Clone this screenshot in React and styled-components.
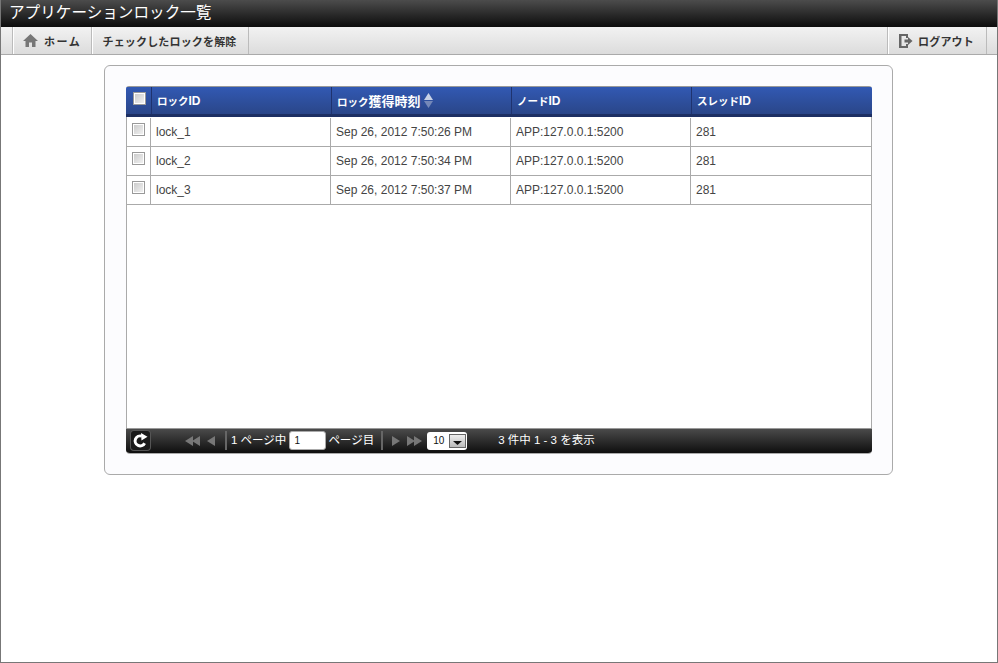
import React from "react";
import styled, { createGlobalStyle } from "styled-components";

const FONT = `"Liberation Sans", "Noto Sans CJK JP", sans-serif`;

const Global = createGlobalStyle`
  html, body { margin: 0; padding: 0; background: #fff; }
  body { font-family: ${FONT}; }
  * { box-sizing: border-box; }
`;

const Page = styled.div`
  width: 998px;
  height: 663px;
  border: 1px solid #777;
  border-top: 0;
  display: flex;
  flex-direction: column;
  background: #fff;
  overflow: hidden;
`;
const TitleBar = styled.div`
  height: 27px;
  padding: 2px 0 0 8px;
  background: linear-gradient(#4c4c4c, #0c0c0c);
  color: #fff;
  font-size: 15.6px;
  line-height: 22px;
  white-space: nowrap;
`;
const Toolbar = styled.div`
  height: 28px;
  display: flex;
  padding: 0 10px 0 11px;
  background: linear-gradient(#f2f2f2, #dcdcdc);
  border-bottom: 1px solid #aaa;
`;
const ToolButton = styled.div`
  display: flex;
  align-items: center;
  gap: ${p => p.$gap || 6}px;
  height: 27px;
  padding: 0 ${p => p.$pad || 11}px 0 ${p => p.$padLeft || 10}px;
  border-left: 1px solid #bbb;
  border-right: ${p => p.$closed ? "1px solid #bbb" : "0"};
  box-shadow: inset 1px 0 #fff;
  font-size: 11px;
  font-weight: bold;
  letter-spacing: ${p => p.$spread || 0}px;
  color: #333;
  white-space: nowrap;
`;
const Spacer = styled.div`flex: 1;`;
const Main = styled.div`
  padding: 10px 104px 0 103px;
`;
const Panel = styled.div`
  height: 410px;
  padding: 20px 20px 20px 21px;
  background: #fcfcfe;
  border: 1px solid #aaa;
  border-radius: 6px;
`;
const Grid = styled.div`
  height: 368px;
  display: flex;
  flex-direction: column;
  background: #fff;
  border-radius: 3px 3px 4px 4px;
  border-bottom: 1px solid #aaa;
  overflow: hidden;
`;
const HeadRow = styled.div`
  height: 31px;
  display: grid;
  grid-template-columns: 25px 180px 180px 180px 1fr;
  background: linear-gradient(#3259b3, #2a4689);
  border-top: 1px solid #999;
  border-bottom: 3px solid #1d2f63;
`;
const HeadCell = styled.div`
  display: flex;
  align-items: center;
  gap: 3px;
  padding: 0 0 0 5px;
  border-left: 1px solid #1f336f;
  color: #fff;
  font-size: 12px;
  font-weight: bold;
  white-space: nowrap;
`;
const HeadCheck = styled.div`
  display: flex;
  align-items: center;
  padding: 0 0 4px 7px;
`;
const Kana = styled.span`
  font-size: 10.5px;
`;
const Kanji = styled.span`
  font-size: 13px;
`;
const Body = styled.div`
  flex: 1;
  padding-top: 1px;
  border-left: 1px solid #aaa;
  border-right: 1px solid #aaa;
`;
const Row = styled.div`
  height: 29px;
  display: grid;
  grid-template-columns: 23px 180px 180px 180px 1fr;
  border-bottom: 1px solid #aaa;
`;
const Cell = styled.div`
  display: flex;
  align-items: center;
  padding-left: 5px;
  border-left: 1px solid #aaa;
  color: #444;
  font-size: 12px;
  white-space: nowrap;
`;
const CheckCell = styled.div`
  display: flex;
  align-items: center;
  padding: 0 0 6px 5px;
`;
const Check = styled.span`
  display: block;
  width: 13px;
  height: 13px;
  border: 1px solid #999;
  box-shadow: inset 0 0 0 1px #fff;
  background: linear-gradient(135deg, #c8c8c8, #f4f4f4);
`;
const Pager = styled.div`
  height: 25px;
  display: flex;
  align-items: center;
  padding: 0 0 1px 5px;
  background: linear-gradient(#4a4a4a, #0e0e0e);
  border-top: 1px solid #999;
  color: #fff;
  font-size: 11.5px;
  white-space: nowrap;
`;
const PagerText = styled.span`
  margin-top: -3px;
  margin-left: ${p => p.$left || 0}px;
`;
const Refresh = styled.div`
  width: 19px;
  height: 19px;
  display: flex;
  align-items: center;
  justify-content: center;
  margin-right: 35px;
  background: #1a1a1a;
  border-radius: 3px;
  box-shadow: 0 0 0 1px #555;
`;
const Nav = styled.div`
  display: flex;
  align-items: center;
  gap: ${p => p.$gap}px;
`;
const Sep = styled.div`
  width: 2px;
  height: 19px;
  margin: 0 ${p => p.$right}px 0 ${p => p.$left}px;
  background: #666;
`;
const PageInput = styled.div`
  width: 37px;
  height: 19px;
  margin: 0 2px 0 3px;
  padding-left: 4px;
  background: #fff;
  border: 1px solid #aaa;
  border-radius: 3px;
  color: #111;
  font-size: 10px;
  line-height: 18px;
`;
const SizeSelect = styled.div`
  width: 40px;
  height: 18px;
  margin-left: 5px;
  display: flex;
  align-items: center;
  justify-content: space-between;
  padding: 0 1px 0 6px;
  background: #fff;
  border-radius: 3px;
  color: #111;
  font-size: 10px;
`;
const SelectArrow = styled.span`
  width: 17px;
  height: 14px;
  display: flex;
  align-items: flex-end;
  justify-content: center;
  padding-bottom: 2px;
  border: 1px solid #666;
  background: linear-gradient(#eee, #bbb);
`;

const Home = () => (
  <svg width="15" height="13" viewBox="0 0 15 13"><path d="M7.5 0 L15 7 H12.5 V13 H9 V8.5 H6 V13 H2.5 V7 H0 Z" fill="#777" /></svg>
);
const Logout = () => (
  <svg width="14" height="14" viewBox="0 0 14 14">
    <path d="M0 0 H9 V4 H7 V2 H2.5 V12 H7 V10 H9 V14 H0 Z" fill="#666" />
    <path d="M5.5 5.5 H9 V3 L13.5 7 L9 11 V8.5 H5.5 Z" fill="#666" />
  </svg>
);
const Sort = () => (
  <svg width="9" height="15" viewBox="0 0 9 15">
    <path d="M4.5 0 L9 7 H0 Z" fill="#c9d2e6" />
    <path d="M0 8 H9 L4.5 15 Z" fill="#7588b8" />
  </svg>
);
const RefreshIcon = () => (
  <svg width="15" height="15" viewBox="0 0 15 15">
    <path d="M11.6 10.2 A5 5 0 1 1 8.8 3.2" fill="none" stroke="#fff" strokeWidth="3" />
    <path d="M8 0 L14.5 3.8 L8.5 7.5 Z" fill="#fff" />
  </svg>
);
const Tri = ({ dir = "left", double }) => {
  const one = (x) => dir === "left"
    ? `M${x + 8} 1 V11 L${x} 6 Z`
    : `M${x} 1 V11 L${x + 8} 6 Z`;
  return (
    <svg width={double ? 15 : 10} height="12" viewBox={double ? "0 0 15 12" : "0 0 10 12"}>
      <path d={double ? `${one(0)} ${one(7)}` : one(1)} fill="#777" />
    </svg>
  );
};

const rows = [
  ["lock_1", "Sep 26, 2012 7:50:26 PM"],
  ["lock_2", "Sep 26, 2012 7:50:34 PM"],
  ["lock_3", "Sep 26, 2012 7:50:37 PM"],
];

export default function App() {
  return (
    <Page>
      <Global />
      <TitleBar>アプリケーションロック一覧</TitleBar>
      <Toolbar>
        <ToolButton $spread={1.6} $pad={10}><Home />ホーム</ToolButton>
        <ToolButton $closed $spread={0.17}>チェックしたロックを解除</ToolButton>
        <Spacer />
        <ToolButton $closed $pad={12} $padLeft={11} $gap={5} $spread={0.2}><Logout />ログアウト</ToolButton>
      </Toolbar>
      <Main>
        <Panel>
          <Grid>
            <HeadRow>
              <HeadCheck><Check /></HeadCheck>
              <HeadCell><span><Kana>ロック</Kana>ID</span></HeadCell>
              <HeadCell><span><Kana>ロック</Kana><Kanji>獲得時刻</Kanji></span><Sort /></HeadCell>
              <HeadCell><span><Kana>ノード</Kana>ID</span></HeadCell>
              <HeadCell><span><Kana>スレッド</Kana>ID</span></HeadCell>
            </HeadRow>
            <Body>
              {rows.map(([id, time]) => (
                <Row key={id}>
                  <CheckCell><Check /></CheckCell>
                  <Cell>{id}</Cell>
                  <Cell>{time}</Cell>
                  <Cell>APP:127.0.0.1:5200</Cell>
                  <Cell>281</Cell>
                </Row>
              ))}
            </Body>
            <Pager>
              <Refresh><RefreshIcon /></Refresh>
              <Nav $gap={6}><Tri double /><Tri /></Nav>
              <Sep $left={9} $right={4} />
              <PagerText>1 ページ中</PagerText>
              <PageInput>1</PageInput>
              <PagerText>ページ目</PagerText>
              <Sep $left={7} $right={8} />
              <Nav $gap={6}><Tri dir="right" /><Tri dir="right" double /></Nav>
              <SizeSelect>10<SelectArrow><svg width="9" height="4" viewBox="0 0 9 4"><path d="M0 0 H9 L4.5 4 Z" fill="#111" /></svg></SelectArrow></SizeSelect>
              <PagerText $left={31}>3 件中 1 - 3 を表示</PagerText>
            </Pager>
          </Grid>
        </Panel>
      </Main>
    </Page>
  );
}
